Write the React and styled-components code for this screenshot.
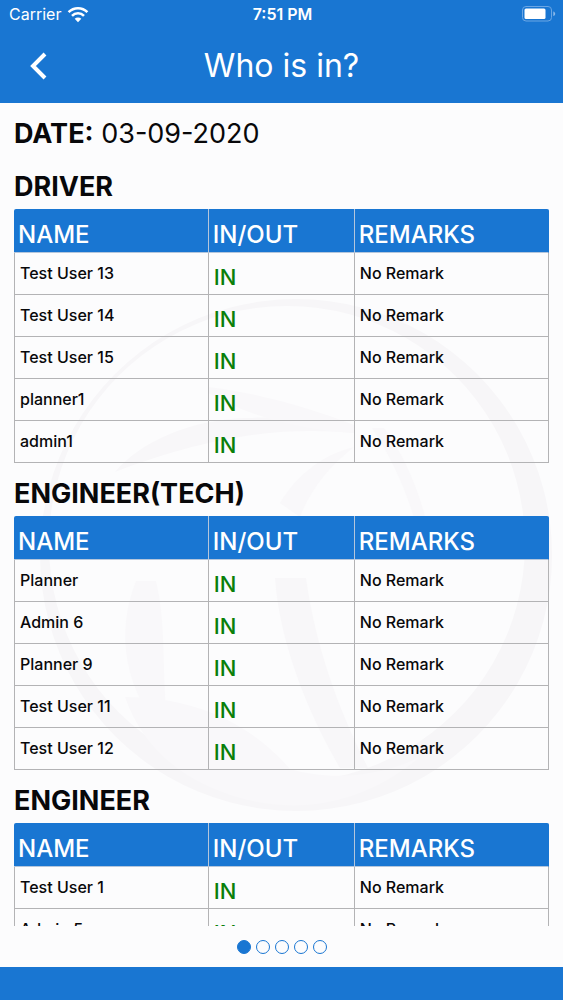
import React, { useState } from 'react';
import styled, { createGlobalStyle } from 'styled-components';

const crews = [
  {
    title: 'DRIVER',
    users: ['Test User 13', 'Test User 14', 'Test User 15', 'planner1', 'admin1'],
  },
  {
    title: 'ENGINEER(TECH)',
    users: ['Planner', 'Admin 6', 'Planner 9', 'Test User 11', 'Test User 12'],
  },
  {
    title: 'ENGINEER',
    users: ['Test User 1', 'Admin 5'],
  },
];

const pages = [0, 1, 2, 3, 4];

const Wifi = () => (
  <svg width="22" height="17" viewBox="0 0 22 17" fill="none" stroke="#fff" strokeWidth="2.6">
    <path d="M1.6 6.2a13.3 13.3 0 0 1 18.8 0" />
    <path d="M5 9.8a8.5 8.5 0 0 1 12 0" />
    <path d="M11 16.2l-3.3-3.4a4.7 4.7 0 0 1 6.6 0z" fill="#fff" stroke="none" />
  </svg>
);

const Battery = () => (
  <svg width="34" height="16" viewBox="0 0 34 16">
    <rect x="0.5" y="0.5" width="29" height="14.5" rx="3.5" fill="none" stroke="#6ba6e4" />
    <rect x="2.5" y="2.5" width="21" height="10.5" rx="1.5" fill="#fff" />
    <path d="M31.3 5.5v4.6c1.2-.4 1.9-1.2 1.9-2.3s-.7-1.9-1.9-2.3z" fill="#8dbaea" />
  </svg>
);

const Chevron = () => (
  <svg width="18" height="28" viewBox="0 0 18 28" fill="none" stroke="#fff" strokeWidth="4">
    <path d="M16 2L4 14l12 12" />
  </svg>
);

const Emblem = () => (
  <Watermark viewBox="0 0 563 823" aria-hidden="true">
    {/* outer ring, heavier towards the bottom right */}
    <path
      fillRule="evenodd"
      fill="#f7f6f8"
      d="M296 196a256 256 0 1 0 .1 0zM287 203a238 238 0 1 1-.1 0z"
    />
    {/* arch */}
    <path d="M115 369c25-30 75-52 130-54 40-2 80 3 110 15-60-5-130-3-240 39z" fill="#f8f7f9" />
    <path d="M208 284c50 6 100 20 146 38v8c-50-3-100-14-146-40z" fill="#f9f8fa" />
    {/* blades */}
    <path d="M136 478c-20 50-14 110 34 160-10-60-2-110-14-160z" fill="#f9f8fa" />
    <path d="M275 475c4 60 30 130 65 190h28c-30-60-52-120-62-190z" fill="#f8f7f9" />
    <path d="M280 400c15-25 40-48 74-56-26 20-44 44-54 70z" fill="#f9f8fa" />
    <path d="M372 325c26 40 42 80 52 130h10c-8-50-24-95-50-130z" fill="#f9f8fa" />
    <path d="M125 594c60 0 120 20 165 72 40 12 90 8 130-12-60 50-130 60-195 36-50-18-84-50-100-96z" fill="#f9f8fa" />
  </Watermark>
);

export default () => {
  const [page, setPage] = useState(0);

  return (
    <Screen>
      <GlobalStyle />
      <Header>
        <StatusBar>
          <Carrier>Carrier <Wifi /></Carrier>
          <Time>7:51 PM</Time>
          <Power><Battery /></Power>
        </StatusBar>
        <NavBar>
          <Back type="button" aria-label="Back"><Chevron /></Back>
          <Title>Who is in?</Title>
        </NavBar>
      </Header>

      <Content>
        <Emblem />
        <List>
          <DateLine><b>DATE:</b> 03-09-2020</DateLine>
          {crews.map(({ title, users }) => (
            <Crew key={title}>
              <CrewTitle>{title}</CrewTitle>
              <Table aria-label={title}>
                <thead>
                  <tr>
                    <HeadCell $width="36.4%">NAME</HeadCell>
                    <HeadCell $width="27.3%">IN/OUT</HeadCell>
                    <HeadCell>REMARKS</HeadCell>
                  </tr>
                </thead>
                <tbody>
                  {users.map(name => (
                    <tr key={name}>
                      <Cell>{name}</Cell>
                      <StatusCell>IN</StatusCell>
                      <Cell>No Remark</Cell>
                    </tr>
                  ))}
                </tbody>
              </Table>
            </Crew>
          ))}
        </List>
        <Dots>
          {pages.map(p => (
            <Dot key={p} type="button" aria-label={`Page ${p + 1}`} $active={p === page} onClick={() => setPage(p)} />
          ))}
        </Dots>
      </Content>
      <Footer />
    </Screen>
  )
};

const GlobalStyle = createGlobalStyle`
  * {
    box-sizing: border-box;
  }
  body {
    margin: 0;
    font-family: Inter, 'Liberation Sans', sans-serif;
    color: #08080a;
  }
`;

const Screen = styled.div`
  display: flex;
  flex-direction: column;
  height: 100vh;
  background: #fcfcfd;
`;

const Header = styled.header`
  flex: none;
  background: #1976d2;
  color: #fff;
`;

const StatusBar = styled.div`
  display: grid;
  grid-template-columns: 1fr auto 1fr;
  align-items: center;
  height: 28px;
  padding: 0 7px 0 9px;
  font-size: 16px;
`;

const Carrier = styled.div`
  display: flex;
  align-items: center;
  gap: 6px;
`;

const Time = styled.div`
  font-weight: 600;
`;

const Power = styled.div`
  display: flex;
  justify-content: flex-end;
`;

const NavBar = styled.div`
  display: grid;
  grid-template-columns: 60px 1fr 60px;
  align-items: center;
  height: 75px;
`;

const Back = styled.button`
  display: flex;
  justify-content: flex-end;
  padding: 0 13px 0 0;
  border: 0;
  background: none;
`;

const Title = styled.h1`
  margin: 0;
  font-size: 32px;
  font-weight: 400;
  text-align: center;
`;

const Content = styled.main`
  position: relative;
  display: flex;
  flex-direction: column;
  flex: 1;
  min-height: 0;
`;

const Watermark = styled.svg`
  position: absolute;
  top: 0;
  left: 0;
  width: 100%;
`;

const List = styled.div`
  position: relative;
  flex: 1;
  min-height: 0;
  overflow: hidden;
  padding: 13px 14px 0;
`;

const DateLine = styled.p`
  margin: 0 0 11px;
  font-size: 27px;
  line-height: 36px;
`;

const Crew = styled.section`
  padding-top: 6px;
`;

const CrewTitle = styled.h2`
  margin: 0;
  padding-bottom: 4px;
  font-size: 27px;
  font-weight: 700;
  line-height: 36px;
`;

const Table = styled.table`
  width: 100%;
  table-layout: fixed;
  border-collapse: separate;
  border-spacing: 0;
  margin-bottom: 7px;
`;

const HeadCell = styled.th`
  width: ${({ $width }) => $width || 'auto'};
  height: 44px;
  padding: 8px 4px 0;
  border-right: 1px solid #b4c6dc;
  border-bottom: 1px solid #b4c6dc;
  background: #1976d2;
  color: #fff;
  font-size: 24px;
  font-weight: 500;
  line-height: 32px;
  text-align: left;
  &:first-child {
    border-top-left-radius: 2px;
  }
  &:last-child {
    border-right-color: #1976d2;
    border-top-right-radius: 2px;
  }
`;

const Cell = styled.td`
  height: 42px;
  padding: 0 5px 2px;
  border-right: 1px solid #b3b3b5;
  border-bottom: 1px solid #b3b3b5;
  font-size: 16px;
  font-weight: 500;
  line-height: 24px;
  &:first-child {
    border-left: 1px solid #b3b3b5;
  }
`;

const StatusCell = styled(Cell)`
  padding: 6px 5px 0;
  color: #0a800a;
  font-size: 22px;
`;

const Dots = styled.nav`
  position: relative;
  display: flex;
  justify-content: center;
  align-items: center;
  gap: 5px;
  height: 41px;
`;

const Dot = styled.button`
  width: 14px;
  height: 14px;
  padding: 0;
  border: 1px solid #1976d2;
  border-radius: 50%;
  background: ${({ $active }) => $active ? '#1976d2' : 'transparent'};
`;

const Footer = styled.footer`
  flex: none;
  height: 33px;
  background: #1976d2;
`;
